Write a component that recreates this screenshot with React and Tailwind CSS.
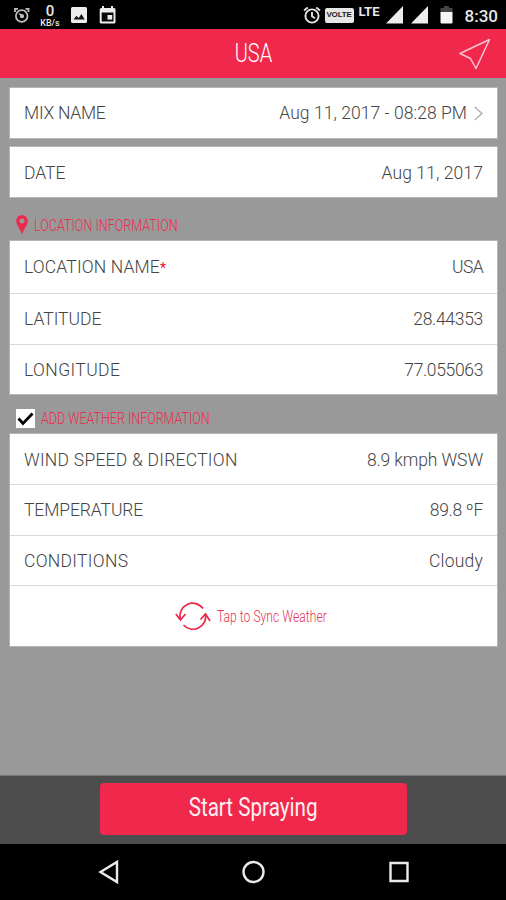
import React from "react";

function StatusBar() {
  return (
    <header className="flex h-[29px] shrink-0 items-center bg-black pl-[14px] pr-[8px] text-[#e6e6e6]">
      <svg className="mt-px" width="16" height="17" viewBox="0 0 16 17" fill="none" stroke="#bdbdbd" strokeWidth="1.8">
        <circle cx="7.7" cy="9" r="5.800" />
        <path d="M1 5V1.800h3M14.500 5V1.800h-3M7.700 9L5.300 6.500" />
        <circle cx="8" cy="9.200" r="1.200" fill="#fff" />
      </svg>
      <div className="ml-[9px] flex w-[22px] flex-col items-center pt-[2px]">
        <span className="h-[15px] text-[15px] font-medium leading-[15px]">0</span>
        <span className="h-[9px] text-[9px] font-medium leading-[9px]">KB/s</span>
      </div>
      <svg className="ml-[10px] mt-px" width="16" height="16" viewBox="0 0 16 16">
        <rect width="16" height="16" rx="1.500" fill="#ededed" />
        <path d="M2.500 12.500l3-3.800 2.200 2.400 2.700-4 3.400 5.400z" fill="#161616" />
      </svg>
      <svg className="ml-[12px]" width="17" height="19" viewBox="0 0 17 19">
        <path d="M3 3V1h2v2h7V1h2v2h1a1.500 1.500 0 0 1 1.500 1.500V17a1.500 1.500 0 0 1-1.500 1.500H2.200A1.500 1.500 0 0 1 .7 17V4.500A1.500 1.500 0 0 1 2.200 3z" fill="#ededed" />
        <path d="M2.700 7.500h11.800v9H2.700z" fill="#0a0a0a" />
        <path d="M8.500 10h4.700v4.600H8.500z" fill="#ededed" />
      </svg>
      <div className="flex-1" />
      <svg className="mt-px" width="18" height="18" viewBox="0 0 18 18" fill="none" stroke="#e3e3e3" strokeWidth="1.900">
        <circle cx="9" cy="10" r="6.600" />
        <path d="M1 4.500l3.800-3M17 4.500l-3.800-3M9 6v4.300l3 1.900" />
      </svg>
      <div className="ml-[4px] mt-px flex h-[15px] w-[29px] items-center justify-center rounded-[2px] bg-[#e6e6e6] text-[#222]">
        <span className="font-[Liberation_Sans,sans-serif] text-[8px] font-bold leading-[10px] tracking-[-0.2px]">VOLTE</span>
      </div>
      <span className="mb-[6px] ml-[5px] w-[22px] whitespace-nowrap text-[13px] font-bold leading-[13px]">LTE</span>
      <svg className="ml-[4px] mt-px" width="44" height="18" viewBox="0 0 44 18" fill="#ededed">
        <path d="M1 17.500L18 0v17.500zM26 17.500L43 0v17.500z" />
      </svg>
      <svg className="ml-[11px] mt-px" width="13" height="18" viewBox="0 0 13 18">
        <path d="M4 0h5v2h3.500v5H.5V2H4z" fill="#444" />
        <path d="M.5 6h12v10.500a1 1 0 0 1-1 1h-10a1 1 0 0 1-1-1z" fill="#f5f5f5" />
      </svg>
      <span className="ml-[12px] mt-[2px] text-[17px] font-medium leading-[20px]">8:30</span>
    </header>
  );
}

function Row({ label, value, required, arrow, height, labelClass = "", valueClass = "" }) {
  return (
    <div className={`flex items-center justify-between pl-[14px] pr-[14px] text-[17.500px] font-light leading-[20px] text-[#444] ${height}`}>
      <span className={`whitespace-nowrap ${labelClass}`}>
        {label}
        {required && <span className="text-[14px] font-normal text-[#e8202f]">*</span>}
      </span>
      <span className="flex items-center">
        <span className={`whitespace-nowrap ${valueClass}`}>{value}</span>
        {arrow && (
          <svg className="ml-[7px]" width="9" height="15" viewBox="0 0 9 15" fill="none" stroke="#aaa" strokeWidth="1.300">
            <path d="M.7 1l7.300 6.500L.7 14" />
          </svg>
        )}
      </span>
    </div>
  );
}

const card = "border border-[#b5b5b5] bg-white";

export default function App() {
  return (
    <div className="flex h-[900px] w-[506px] flex-col overflow-hidden bg-[#999] font-[Roboto,sans-serif]">
      <StatusBar />
      <div className="flex h-[49px] shrink-0 items-center bg-[#f0284c] pl-[222px] pr-[15px] text-white">
        <div className="flex w-[62px] justify-center pt-px">
          <span className="scale-x-80 text-[25px] font-light leading-[30px]">USA</span>
        </div>
        <div className="flex-1" />
        <svg width="32" height="32" viewBox="0 0 32 32" fill="none" stroke="#ffc6d0" strokeWidth="1.500" strokeLinejoin="round">
          <path d="M30.500 1.500L1 15.500l10.500 5L17 30.500z" />
        </svg>
      </div>

      <main className="flex h-[697px] shrink-0 flex-col pl-[9px] pr-[8px] pt-[8.500px]">
        <section className={`${card} h-[52px]`}>
          <Row label="MIX NAME" value="Aug 11, 2017 - 08:28 PM" arrow height="h-[51px]" labelClass="tracking-[-0.250px]" valueClass="tracking-[0.050px]" />
        </section>
        <section className={`${card} mt-[7.500px] h-[52px]`}>
          <Row label="DATE" value="Aug 11, 2017" height="h-[52px]" valueClass="tracking-[0.100px]" />
        </section>

        <div className="flex h-[42px] items-center pl-[7px] pt-[12px]">
          <svg width="12" height="20" viewBox="0 0 12 20">
            <path d="M6 0a5.800 5.800 0 0 0-5.800 5.800C.2 10 4 13 6 20c2-7 5.800-10 5.800-14.200A5.800 5.800 0 0 0 6 0zm0 3.400a2.500 2.500 0 1 1 0 5 2.500 2.500 0 0 1 0-5z" fill="#f0284c" fillRule="evenodd" />
          </svg>
          <span className="-mt-px ml-[6px] origin-left scale-x-[0.74] whitespace-nowrap text-[17px] font-light leading-[20px] text-[#ec2d50]">LOCATION INFORMATION</span>
        </div>
        <section className={`${card} h-[155px] divide-y divide-[#d9d9d9]`}>
          <Row label="LOCATION NAME" required value="USA" height="h-[53px]" labelClass="tracking-[0.150px]" valueClass="tracking-[-0.600px]" />
          <Row label="LATITUDE" value="28.44353" height="h-[51px]" valueClass="tracking-[-0.300px]" />
          <Row label="LONGITUDE" value="77.055063" height="h-[49px]" labelClass="tracking-[0.400px]" valueClass="tracking-[-0.350px]" />
        </section>

        <div className="flex h-[38px] items-center pl-[7px] pt-[8px]">
          <svg width="19" height="19" viewBox="0 0 19 19">
            <path d="M0 0h19v19H0z" fill="#fff" />
            <path d="M2.500 9.500l4.500 5L16.500 4.500" fill="none" stroke="#000" strokeWidth="2.800" />
          </svg>
          <span className="ml-[6px] origin-left scale-x-[0.735] whitespace-nowrap text-[17px] font-light leading-[20px] text-[#ec2d50]">ADD WEATHER INFORMATION</span>
        </div>
        <section className={`${card} h-[214px] divide-y divide-[#d9d9d9]`}>
          <Row label="WIND SPEED &amp; DIRECTION" value="8.9 kmph WSW" height="h-[51px] pt-px" labelClass="tracking-[0.250px]" valueClass="tracking-[-0.100px]" />
          <Row label="TEMPERATURE" value="89.8 ºF" height="h-[51px]" labelClass="tracking-[-0.100px]" valueClass="tracking-[-0.300px]" />
          <Row label="CONDITIONS" value="Cloudy" height="h-[50px]" labelClass="tracking-[0.300px]" valueClass="tracking-[0.200px]" />
          <div className="flex h-[60px] items-center pl-[165px] text-[#ea3558]">
            <svg width="36" height="29" viewBox="0 0 36 29" fill="none" stroke="#ee2448" strokeWidth="1.700">
              <path d="M5.500 17.500A12.700 12.700 0 0 1 28 6.500M30.500 12.500A12.700 12.700 0 0 1 8.500 23" />
              <path d="M.8 12l4.700 6 5-6M25.500 17.500l5-5.500 4.500 7" />
            </svg>
            <span className="ml-[6px] origin-left scale-x-[0.715] whitespace-nowrap text-[17px] font-light leading-[20px]">Tap to Sync Weather</span>
          </div>
        </section>
      </main>

      <footer className="flex h-[69px] shrink-0 justify-center border-t border-[#777] bg-[#4d4d4d] pt-[7px]">
        <button className="flex h-[52px] w-[307px] items-center justify-center rounded-[4px] bg-[#f0284c] pb-[3px] text-[#fff0f2]">
          <span className="scale-x-[0.825] whitespace-nowrap text-[25px] font-normal leading-[30px]">Start Spraying</span>
        </button>
      </footer>
      <nav className="flex h-[56px] shrink-0 items-center bg-black pl-[98px] pr-[97px]">
        <svg className="w-full" height="26" viewBox="0 0 311 26" fill="none" stroke="#eaeaea" strokeWidth="2.400">
          <path d="M2.500 13L19 3v20z" />
          <circle cx="155.500" cy="13" r="10" />
          <path d="M292.500 4h17v18h-17z" />
        </svg>
      </nav>
    </div>
  );
}
